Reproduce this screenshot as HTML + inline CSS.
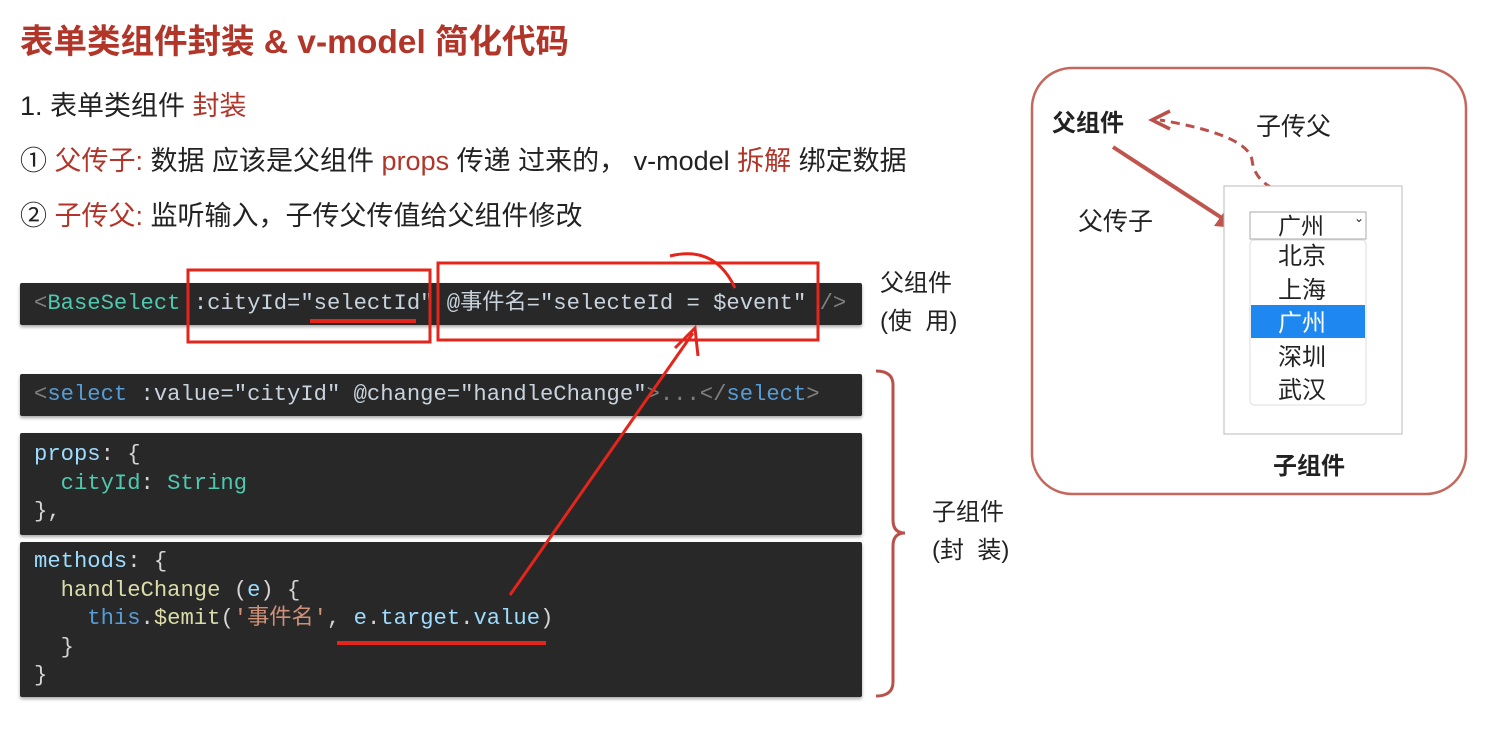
<!DOCTYPE html>
<html><head><meta charset="utf-8"><style>
body{margin:0;width:1501px;height:735px;background:#fff;position:relative;overflow:hidden;font-family:"Liberation Sans","Noto Sans CJK SC",sans-serif;color:#222}
.a{position:absolute;white-space:nowrap}
.r{color:#b2352a}
.code{position:absolute;left:20px;width:842px;background:#282828;box-shadow:0 2px 3px rgba(0,0,0,.35);border-radius:2px;font-family:"Liberation Mono","Noto Sans CJK SC",monospace;font-size:22.2px;color:#d4d4d4;white-space:pre;line-height:28.5px;padding-left:14px;box-sizing:border-box}
.g{color:#808080}.t{color:#4ec9b0}.b{color:#569cd6}.at{color:#c8d3de}.s{color:#d4d4d4}.lb{color:#9cdcfe}.y{color:#dcdcaa}.o{color:#ce9178}
</style></head><body>
<div class="a r" style="left:20px;top:14px;font-size:33.5px;font-weight:bold">表单类组件封装 &amp; v-model 简化代码</div>
<div class="a" style="left:20px;top:84px;font-size:27px">1. 表单类组件 <span class="r">封装</span></div>
<div class="a" style="left:20px;top:139px;font-size:27px">① <span class="r">父传子:</span> 数据 应该是父组件 <span class="r">props</span> 传递 过来的， v-model <span class="r">拆解</span> 绑定数据</div>
<div class="a" style="left:20px;top:194px;font-size:27px">② <span class="r">子传父:</span> 监听输入，子传父传值给父组件修改</div>

<div class="code" style="top:283px;height:42px;line-height:42px"><span class="g">&lt;</span><span class="t">BaseSelect</span> <span class="at">:cityId="selectId" @事件名="selecteId = $event"</span> <span class="g">/&gt;</span></div>
<div class="code" style="top:374px;height:42px;line-height:42px"><span class="g">&lt;</span><span class="b">select</span> <span class="at">:value="cityId" @change="handleChange"</span><span class="g">&gt;...&lt;/</span><span class="b">select</span><span class="g">&gt;</span></div>
<div class="code" style="top:433px;height:102px;padding-top:8px"><span class="lb">props</span>: {
  <span class="t">cityId</span>: <span class="t">String</span>
},</div>
<div class="code" style="top:542px;height:155px;padding-top:6px"><span class="lb">methods</span>: {
  <span class="y">handleChange</span> (<span class="lb">e</span>) {
    <span class="b">this</span>.<span class="y">$emit</span>(<span class="o">'事件名'</span>, <span class="lb">e</span>.<span class="lb">target</span>.<span class="lb">value</span>)
  }
}</div>

<div class="a" style="left:880px;top:265px;font-size:24px;line-height:38px">父组件<br>(使&nbsp;&nbsp;用)</div>
<div class="a" style="left:932px;top:494px;font-size:24px;line-height:38px">子组件<br>(封&nbsp;&nbsp;装)</div>

<svg class="a" style="left:0;top:0" width="1501" height="735">
<g fill="none" stroke="#e3251b" stroke-width="3">
<rect x="188" y="270" width="242" height="72"/>
<rect x="438" y="263" width="380" height="77"/>
<line x1="310" y1="321" x2="416" y2="321" stroke-width="4"/>
<line x1="337" y1="643" x2="546" y2="643" stroke-width="4"/>
<line x1="510" y1="595" x2="693" y2="333"/>
<polyline points="675,348 695,328 698,356"/>
<path d="M670 256 Q715 245 735 288"/>
</g>
<path d="M876 371 Q893 371 893 385 L893 520 Q893 533 905 533 Q893 533 893 546 L893 682 Q893 696 876 696" fill="none" stroke="#b9504a" stroke-width="3"/>
<rect x="1032" y="68" width="434" height="426" rx="40" fill="none" stroke="#c4675d" stroke-width="2.5"/>
<path d="M1286 193 Q1255 185 1252 160 Q1248 135 1160 120" fill="none" stroke="#b9504a" stroke-width="3" stroke-dasharray="9 6"/>
<polyline points="1170,111 1152,120 1170,129" fill="none" stroke="#b9504a" stroke-width="3.5"/>
<line x1="1113" y1="147" x2="1225" y2="220" stroke="#c0554d" stroke-width="4"/>
<polygon points="1236,228 1214,226 1224,212" fill="#c0554d"/>
<rect x="1224" y="186" width="178" height="248" fill="#fff" stroke="#bbb" stroke-width="1"/>
<rect x="1250" y="212" width="116" height="27" fill="#fff" stroke="#aaa"/>
<rect x="1250" y="240" width="116" height="165" rx="4" fill="#fff" stroke="#ddd"/>
<rect x="1251" y="305" width="114" height="33" fill="#1e88f0"/>
</svg>
<div class="a" style="left:1052px;top:103px;font-size:24px;font-weight:bold">父组件</div>
<div class="a" style="left:1256px;top:107px;font-size:25px">子传父</div>
<div class="a" style="left:1078px;top:202px;font-size:25px">父传子</div>
<div class="a" style="left:1278px;top:207px;font-size:23px">广州</div>
<div class="a" style="left:1354px;top:211px;font-size:12px">⌄</div>
<div class="a" style="left:1278px;top:240px;font-size:24px;line-height:33.5px">北京<br>上海<br><span style="color:#fff">广州</span><br>深圳<br>武汉</div>
<div class="a" style="left:1273px;top:446px;font-size:24px;font-weight:bold">子组件</div>
</body></html>
